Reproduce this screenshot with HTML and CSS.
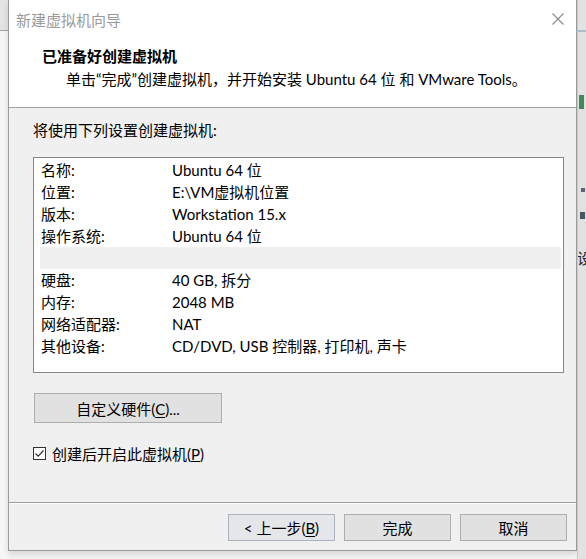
FILE: index.html
```html
<!DOCTYPE html>
<html lang="zh-CN">
<head>
<meta charset="utf-8">
<title>新建虚拟机向导</title>
<link rel="stylesheet" href="styles.css">
</head>
<body>
<div class="screen">
  <div class="bg-left"><div class="bg-left-top"></div></div>
  <div class="dialog">
    <div class="titlebar">
      <span class="title">新建虚拟机向导</span>
      <svg class="close" width="12" height="12" viewBox="0 0 12 12"><path d="M0.5 0.5 L11.5 11.5 M11.5 0.5 L0.5 11.5" stroke="#8a8a8a" stroke-width="1.1" fill="none"/></svg>
    </div>
    <div class="header">
      <div class="heading">已准备好创建虚拟机</div>
      <div class="subtitle">单击“完成”创建虚拟机，并开始安装 Ubuntu 64 位 和 VMware Tools。</div>
    </div>
    <div class="content">
      <div class="intro">将使用下列设置创建虚拟机:</div>
      <div class="listbox">
        <div class="row"><span class="key">名称:</span><span class="val">Ubuntu 64 位</span></div>
        <div class="row"><span class="key">位置:</span><span class="val">E:\VM虚拟机位置</span></div>
        <div class="row"><span class="key">版本:</span><span class="val">Workstation 15.x</span></div>
        <div class="row"><span class="key">操作系统:</span><span class="val">Ubuntu 64 位</span></div>
        <div class="sep"></div>
        <div class="row"><span class="key">硬盘:</span><span class="val">40 GB, 拆分</span></div>
        <div class="row"><span class="key">内存:</span><span class="val">2048 MB</span></div>
        <div class="row"><span class="key">网络适配器:</span><span class="val">NAT</span></div>
        <div class="row"><span class="key">其他设备:</span><span class="val">CD/DVD, USB 控制器, 打印机, 声卡</span></div>
      </div>
      <button class="btn custom">自定义硬件(<u>C</u>)...</button>
      <label class="check">
        <span class="box"><svg width="11" height="11" viewBox="0 0 11 11"><path d="M1.5 5.5 L4.2 8.2 L9.5 2.5" stroke="#333" stroke-width="1.2" fill="none"/></svg></span>
        <span>创建后开启此虚拟机(<u>P</u>)</span>
      </label>
    </div>
    <div class="footer">
      <button class="btn foot primary">&lt; 上一步(<u>B</u>)</button>
      <button class="btn foot">完成</button>
      <button class="btn foot">取消</button>
    </div>
  </div>
  <div class="bg-right">
    <div class="bg-right-line"></div>
    <div class="bg-right-green"></div>
    <div class="bg-right-dot1"></div>
    <div class="bg-right-dot2"></div>
    <div class="bg-right-char">设</div>
  </div>
</div>
</body>
</html>
```
FILE: styles.css
```css
* { box-sizing: border-box; }
html, body { margin: 0; padding: 0; }
body {
  width: 586px;
  height: 559px;
  overflow: hidden;
  background: #f3f3f3;
  font-family: "Lato", "Noto Sans CJK SC", sans-serif;
  font-size: 15px;
  color: #000;
}
.screen {
  display: flex;
  height: 559px;
}
.bg-left {
  width: 8px;
  flex: none;
  background: #f6f6f6;
}
.bg-left-top {
  height: 31px;
  background: #e4e4e4;
  border-bottom: 1px solid #9aa6b0;
}
.dialog {
  width: 569px;
  height: 551px;
  flex: none;
  border: 1px solid #9a9a9a;
  border-top: none;
  background: #f0f0f0;
  display: flex;
  flex-direction: column;
  box-shadow: 0 3px 6px rgba(0,0,0,0.12);
}
.titlebar {
  height: 38px;
  background: #fff;
  display: flex;
  align-items: center;
  justify-content: space-between;
  padding: 0 12px 0 7px;
}
.title {
  color: #9a9a9a;
  font-size: 15px;
  font-family: "Noto Sans CJK SC", sans-serif;
}
.close { display: block; }
.header {
  height: 70px;
  background: #fff;
  border-bottom: 1px solid #a0a0a0;
  padding: 8px 0 0 33px;
}
.heading {
  font-family: "Noto Sans CJK SC", sans-serif;
  font-weight: bold;
  font-size: 15px;
  line-height: 20px;
}
.subtitle {
  margin-top: 3px;
  padding-left: 24px;
  line-height: 20px;
}
.content {
  height: 394px;
  padding: 12px 0 0 24px;
}
.intro {
  line-height: 20px;
}
.listbox {
  margin-top: 17px;
  width: 531px;
  height: 216px;
  background: #fff;
  border: 1px solid #828790;
  padding: 1px 2px 0 6px;
}
.row {
  height: 22px;
  line-height: 22px;
  display: flex;
  padding-left: 1px;
}
.key { width: 131px; flex: none; }
.val { white-space: nowrap; }
.sep {
  height: 22px;
  background: #f0f0f0;
}
.btn {
  font: inherit;
  color: #000;
  background: #e1e1e1;
  border: 1px solid #adadad;
  padding: 0;
  cursor: default;
}
.btn u { text-decoration: underline; text-underline-offset: 2px; }
.custom {
  display: block;
  margin: 20px 0 0 1px;
  width: 188px;
  height: 30px;
}
.check {
  margin-top: 20px;
  display: flex;
  align-items: center;
  height: 20px;
  gap: 6px;
}
.box {
  width: 13px;
  height: 13px;
  border: 1px solid #333;
  background: #fff;
  display: flex;
  align-items: center;
  justify-content: center;
}
.box svg { display: block; }
.footer {
  flex: 1;
  border-top: 1px solid #a0a0a0;
  box-shadow: inset 0 1px 0 #fff;
  display: flex;
  justify-content: flex-end;
  align-items: flex-start;
  gap: 9px;
  padding: 11px 9px 0 0;
}
.foot {
  width: 107px;
  height: 27px;
}
.primary {
  border-color: #a9b4c0;
  background: #e4e6ea;
}
.bg-right {
  flex: 1;
  position: relative;
  overflow: hidden;
  background: #e2e2e2;
  border-left: 1px solid #c8c8c8;
}
.bg-right-line {
  margin-top: 30px;
  height: 2px;
  background: #a8bccd;
}
.bg-right-green {
  position: absolute;
  left: 1px;
  top: 95px;
  width: 5px;
  height: 14px;
  background: #3f8a5a;
}
.bg-right-dot1 {
  position: absolute;
  left: 3px;
  top: 188px;
  width: 4px;
  height: 4px;
  background: #5a6470;
}
.bg-right-dot2 {
  position: absolute;
  left: 2px;
  top: 212px;
  width: 5px;
  height: 7px;
  background: #4a5562;
}
.bg-right-char {
  position: absolute;
  left: -1px;
  top: 247px;
  font-family: "Noto Sans CJK SC", sans-serif;
  font-size: 15px;
  color: #222;
}
```
